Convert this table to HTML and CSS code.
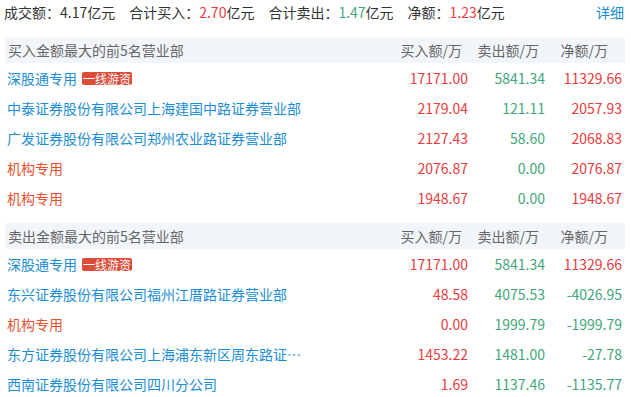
FILE: index.html
```html
<!DOCTYPE html>
<html lang="zh">
<head>
<meta charset="utf-8">
<link rel="stylesheet" href="styles.css">
</head>
<body>
<div class="page">
  <div class="summary">
    <span class="item">成交额：4.17亿元</span>
    <span class="item">合计买入：<span class="up">2.70</span>亿元</span>
    <span class="item">合计卖出：<span class="down">1.47</span>亿元</span>
    <span class="item">净额：<span class="up">1.23</span>亿元</span>
    <a class="detail">详细</a>
  </div>

  <div class="section">
    <div class="row head">
      <div class="name">买入金额最大的前5名营业部</div>
      <div class="num h1">买入额/万</div>
      <div class="num h2">卖出额/万</div>
      <div class="num h3">净额/万</div>
    </div>
    <div class="row">
      <div class="name"><span class="link">深股通专用</span><span class="badge">一线游资</span></div>
      <div class="num up">17171.00</div><div class="num down">5841.34</div><div class="num up">11329.66</div>
    </div>
    <div class="row">
      <div class="name"><span class="link">中泰证券股份有限公司上海建国中路证券营业部</span></div>
      <div class="num up">2179.04</div><div class="num down">121.11</div><div class="num up">2057.93</div>
    </div>
    <div class="row">
      <div class="name"><span class="link">广发证券股份有限公司郑州农业路证券营业部</span></div>
      <div class="num up">2127.43</div><div class="num down">58.60</div><div class="num up">2068.83</div>
    </div>
    <div class="row">
      <div class="name"><span class="link inst">机构专用</span></div>
      <div class="num up">2076.87</div><div class="num down">0.00</div><div class="num up">2076.87</div>
    </div>
    <div class="row">
      <div class="name"><span class="link inst">机构专用</span></div>
      <div class="num up">1948.67</div><div class="num down">0.00</div><div class="num up">1948.67</div>
    </div>
  </div>

  <div class="section second">
    <div class="row head">
      <div class="name">卖出金额最大的前5名营业部</div>
      <div class="num h1">买入额/万</div>
      <div class="num h2">卖出额/万</div>
      <div class="num h3">净额/万</div>
    </div>
    <div class="row">
      <div class="name"><span class="link">深股通专用</span><span class="badge">一线游资</span></div>
      <div class="num up">17171.00</div><div class="num down">5841.34</div><div class="num up">11329.66</div>
    </div>
    <div class="row">
      <div class="name"><span class="link">东兴证券股份有限公司福州江厝路证券营业部</span></div>
      <div class="num up">48.58</div><div class="num down">4075.53</div><div class="num down">-4026.95</div>
    </div>
    <div class="row">
      <div class="name"><span class="link inst">机构专用</span></div>
      <div class="num up">0.00</div><div class="num down">1999.79</div><div class="num down">-1999.79</div>
    </div>
    <div class="row">
      <div class="name"><span class="link">东方证券股份有限公司上海浦东新区周东路证券营业部</span></div>
      <div class="num up">1453.22</div><div class="num down">1481.00</div><div class="num down">-27.78</div>
    </div>
    <div class="row">
      <div class="name"><span class="link">西南证券股份有限公司四川分公司</span></div>
      <div class="num up">1.69</div><div class="num down">1137.46</div><div class="num down">-1135.77</div>
    </div>
  </div>
</div>
</body>
</html>
```
FILE: styles.css
```css
html, body {
  margin: 0;
  padding: 0;
  background: #fff;
}
body {
  font-family: "Noto Sans CJK SC", "Noto Sans", sans-serif;
  font-size: 14px;
  color: #333;
}
.page {
  width: 631px;
}
.summary {
  display: flex;
  align-items: center;
  height: 24px;
  line-height: 24px;
  padding: 0 7px 0 4px;
  margin-bottom: 13px;
  white-space: nowrap;
}
.summary .item {
  margin-right: 14px;
}
.detail {
  margin-left: auto;
  color: #1a8dd4;
  cursor: pointer;
}
.up { color: #e93c3c; }
.down { color: #3fa67a; }
.section {
  margin: 0 6px 0 5px;
}
.section.second {
  margin-top: 10px;
}
.row {
  display: grid;
  grid-template-columns: 1fr 77px 77px 77px;
  align-items: center;
  height: 30px;
  padding: 0 3px 0 2px;
  white-space: nowrap;
}
.row.head {
  height: 26px;
  background: #f2f6fa;
  color: #666;
}
.name {
  display: flex;
  align-items: center;
  min-width: 0;
}
.row.head .name {
  padding-left: 1px;
}
.link {
  color: #1a8dd4;
  max-width: 300px;
  overflow: hidden;
  text-overflow: ellipsis;
}
.link.inst {
  color: #e9502f;
}
.badge {
  margin-left: 5px;
  background: #dd4b39;
  color: #fff;
  font-size: 12px;
  line-height: 13px;
  height: 13px;
  padding: 0 1px;
  border-radius: 2px;
}
.num {
  text-align: right;
}
.h1, .h2 { padding-right: 6px; }
.h3 { padding-right: 14px; }
```
